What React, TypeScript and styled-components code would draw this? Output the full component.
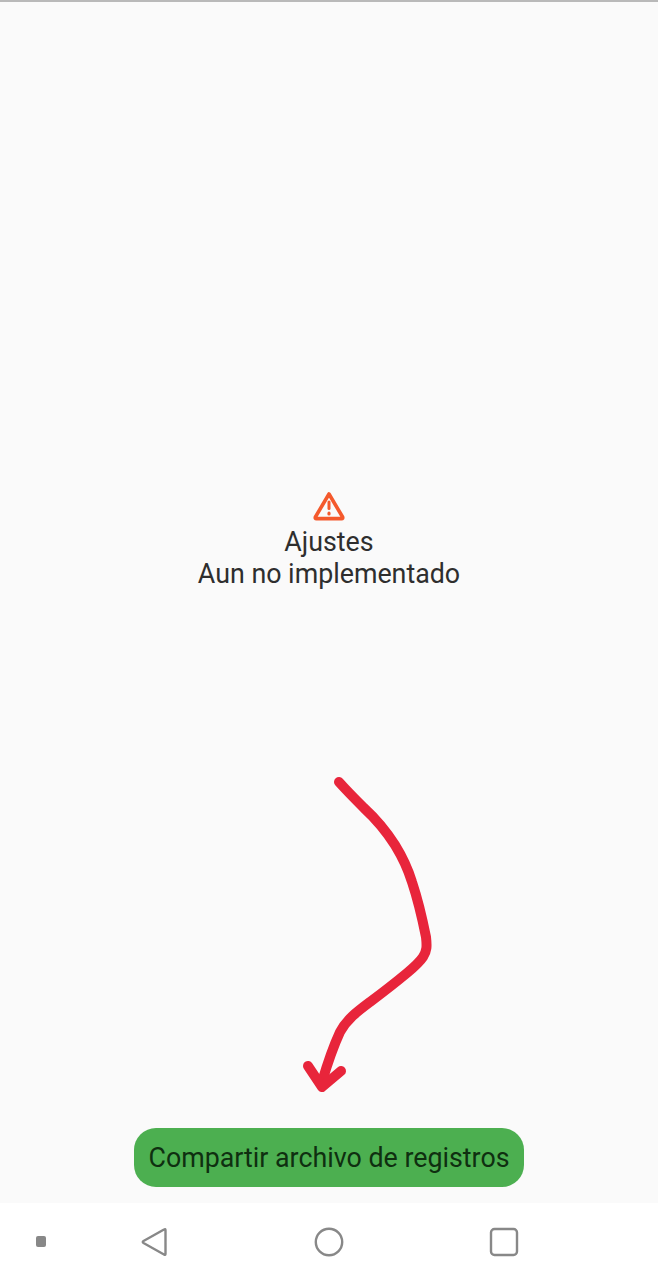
import React from "react";
import styled, { createGlobalStyle } from "styled-components";

const Global = createGlobalStyle`
  html, body { margin: 0; padding: 0; background: #fafafa; }
  #root { width: 658px; height: 1280px; }
`;

const Screen = styled.div`
  position: relative;
  width: 658px;
  height: 1280px;
  display: flex;
  flex-direction: column;
  overflow: hidden;
  background: #fafafa;
  font-family: Roboto, "Liberation Sans", sans-serif;
`;

const TopEdge = styled.div`
  height: 2px;
  flex: none;
  background: #b9b9b9;
`;

const Main = styled.main`
  flex: 1;
  display: flex;
  flex-direction: column;
  align-items: center;
  min-height: 0;
`;

const Notice = styled.section`
  margin-top: 487px;
  display: flex;
  flex-direction: column;
  align-items: center;
`;

const WarningIcon = styled.svg`
  display: block;
  width: 34px;
  height: 34px;
  margin-bottom: 3px;
`;

const NoticeLine = styled.div`
  font-size: 26.8px;
  line-height: 32px;
  color: #2e2e2e;
  white-space: nowrap;
`;

const ShareButton = styled.button`
  margin-top: auto;
  margin-bottom: 16px;
  width: 390px;
  height: 59px;
  padding: 1px 0 0;
  border: 0;
  border-radius: 22px;
  background: #4caf50;
  color: #0f2f10;
  font-family: inherit;
  font-size: 26.8px;
  white-space: nowrap;
`;

const NavBar = styled.nav`
  flex: none;
  height: 77px;
  background: #ffffff;
  display: grid;
  grid-template-columns: 82px 144px 206px 144px;
  align-items: center;
`;

const NavCell = styled.div`
  display: flex;
  justify-content: center;
`;

const NavIcon = styled.svg`
  display: block;
  fill: none;
  stroke: #888888;
  stroke-width: 2.4;
  stroke-linejoin: round;
`;

const Scribble = styled.svg`
  position: absolute;
  inset: 0;
  width: 658px;
  height: 1280px;
  pointer-events: none;
  fill: none;
  stroke: #e8253b;
  stroke-width: 10;
  stroke-linecap: round;
  stroke-linejoin: round;
`;

const DotIcon = styled.div`
  width: 10px;
  height: 11px;
  border-radius: 2px;
  background: #888888;
`;

export default function App() {
  return (
    <Screen>
      <Global />
      <TopEdge />
      <Main>
        <Notice>
          <WarningIcon viewBox="0 0 34 34" fill="none" stroke="#f4592c" strokeWidth="3.6" strokeLinejoin="round">
            <path d="M17 5 L30.6 28 Q31.2 29.6 29.6 29.6 H4.4 Q2.8 29.6 3.4 28 Z" />
            <path d="M17 13 V19.5" strokeLinecap="round" strokeWidth="3" />
            <path d="M17 24.2 V25" strokeLinecap="round" strokeWidth="3.2" />
          </WarningIcon>
          <NoticeLine>Ajustes</NoticeLine>
          <NoticeLine>Aun no implementado</NoticeLine>
        </Notice>
        <ShareButton>Compartir archivo de registros</ShareButton>
      </Main>
      <NavBar>
        <NavCell>
          <DotIcon />
        </NavCell>
        <NavCell>
          <NavIcon width="28" height="30" viewBox="0 0 28 30">
            <path d="M25.5 3 Q25.5 1.5 24 2.5 L3.5 14 Q2 15 3.5 16 L24 27.5 Q25.5 28.5 25.5 27 Z" />
          </NavIcon>
        </NavCell>
        <NavCell>
          <NavIcon width="30" height="30" viewBox="0 0 30 30">
            <circle cx="15" cy="15" r="13.2" />
          </NavIcon>
        </NavCell>
        <NavCell>
          <NavIcon width="30" height="30" viewBox="0 0 30 30">
            <rect x="2" y="2" width="26" height="26" rx="3.5" />
          </NavIcon>
        </NavCell>
      </NavBar>
      <Scribble viewBox="0 0 658 1280">
        <path d="M339 782 C347 791 356 800 364 808 C376 819 386 831 395 845 C403 858 408 869 412 882 C418 900 422 917 426 937 C427 946 427 951 423 957 C419 963 413 968 407 973 C395 983 382 993 370 1002 C358 1011 347 1019 340 1032 C334 1045 327 1065 322 1082" />
        <path d="M308 1066 L322 1087 L341 1071" />
      </Scribble>
    </Screen>
  );
}
